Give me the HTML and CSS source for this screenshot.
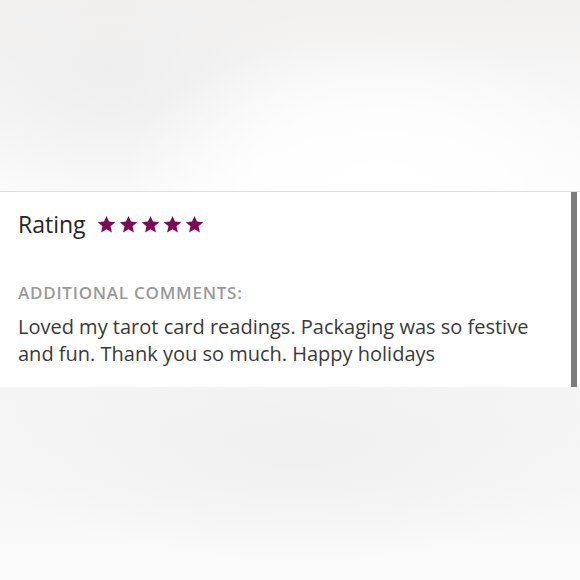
FILE: index.html
```html
<!DOCTYPE html>
<html>
<head>
<meta charset="utf-8">
<link rel="stylesheet" href="styles.css">
</head>
<body>
<div class="page">
  <div class="blur-top"></div>
  <div class="card">
    <div class="content">
      <div class="rating-row">
        <span class="rating-label">Rating</span>
        <span class="stars">
          <svg class="star" viewBox="0 0 24 24"><path d="M12 2.2l2.9 6.5 7.1.7-5.4 4.7 1.6 7-6.2-3.7-6.2 3.7 1.6-7L2 9.4l7.1-.7z"/></svg>
          <svg class="star" viewBox="0 0 24 24"><path d="M12 2.2l2.9 6.5 7.1.7-5.4 4.7 1.6 7-6.2-3.7-6.2 3.7 1.6-7L2 9.4l7.1-.7z"/></svg>
          <svg class="star" viewBox="0 0 24 24"><path d="M12 2.2l2.9 6.5 7.1.7-5.4 4.7 1.6 7-6.2-3.7-6.2 3.7 1.6-7L2 9.4l7.1-.7z"/></svg>
          <svg class="star" viewBox="0 0 24 24"><path d="M12 2.2l2.9 6.5 7.1.7-5.4 4.7 1.6 7-6.2-3.7-6.2 3.7 1.6-7L2 9.4l7.1-.7z"/></svg>
          <svg class="star" viewBox="0 0 24 24"><path d="M12 2.2l2.9 6.5 7.1.7-5.4 4.7 1.6 7-6.2-3.7-6.2 3.7 1.6-7L2 9.4l7.1-.7z"/></svg>
        </span>
      </div>
      <div class="comments-label">ADDITIONAL COMMENTS:</div>
      <p class="comment">Loved my tarot card readings. Packaging was so festive and fun. Thank you so much. Happy holidays</p>
    </div>
    <div class="scrollbar"></div>
  </div>
  <div class="blur-bottom"></div>
</div>
</body>
</html>
```
FILE: styles.css
```css
html, body {
  margin: 0;
  padding: 0;
  background: #ffffff;
}
.page {
  width: 580px;
  height: 580px;
  display: flex;
  flex-direction: column;
  overflow: hidden;
  font-family: "Open Sans", Lato, sans-serif;
}
.blur-top {
  height: 191px;
  border-bottom: 1px solid #dedede;
  background:
    radial-gradient(ellipse 260px 150px at 380px 185px, #ffffff 0%, rgba(255,255,255,0.7) 50%, rgba(255,255,255,0) 100%),
    radial-gradient(ellipse 200px 140px at 110px 70px, #efeeee 0%, rgba(240,239,239,0) 100%),
    linear-gradient(180deg, #f1f0ef 0%, #f7f6f6 45%, #fbfbfb 100%);
}
.card {
  height: 195px;
  display: flex;
  background: #ffffff;
}
.content {
  flex: 1;
  padding: 13px 0 0 18px;
}
.rating-row {
  display: flex;
  align-items: center;
  height: 38px;
}
.rating-label {
  font-size: 23px;
  color: #262626;
  font-weight: 500;
}
.stars {
  display: flex;
  gap: 1px;
  margin-left: 10px;
  margin-top: 0;
}
.star {
  width: 21px;
  height: 21px;
  fill: #7a0b57;
}
.comments-label {
  margin-top: 38px;
  font-size: 17px;
  font-weight: 600;
  letter-spacing: 0.75px;
  color: #9a9a9a;
}
.comment {
  margin: 9px 0 0;
  font-size: 20px;
  line-height: 27px;
  color: #3a3a3a;
  width: 535px;
}
.scrollbar {
  width: 6px;
  margin-right: 3px;
  background: #7c7c7c;
}
.blur-bottom {
  flex: 1;
  background:
    radial-gradient(ellipse 320px 110px at 300px 60px, #f0f0f0 0%, rgba(240,240,240,0) 100%),
    linear-gradient(180deg, #f4f4f4 0%, #f6f6f6 50%, #fbfbfb 100%);
}
```
